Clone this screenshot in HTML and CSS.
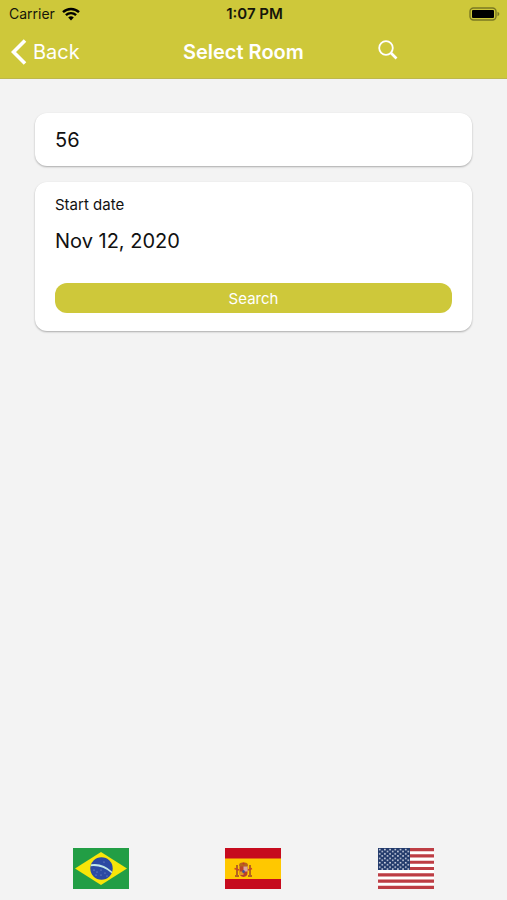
FILE: index.html
```html
<!DOCTYPE html>
<html lang="en">
<head>
    <meta charset="UTF-8">
    <meta name="viewport" content="width=device-width, initial-scale=1.0">
    <title>Select Room</title>
    <link rel="stylesheet" href="styles.css">
</head>
<body>
    <header class="header">
        <div class="status-bar">
            <div class="carrier">
                <span>Carrier</span>
                <svg class="wifi" viewBox="0 0 18 14" width="18" height="14" aria-hidden="true">
                    <path d="M1 5.2a11.5 11.5 0 0 1 16 0" />
                    <path d="M3.9 8.2a7.4 7.4 0 0 1 10.2 0" />
                    <path class="dot" d="M9 13.4L6.2 10.5a4.1 4.1 0 0 1 5.6 0z" />
                </svg>
            </div>
            <span class="time">1:07 PM</span>
            <svg class="battery" viewBox="0 0 31 14" width="31" height="14" aria-hidden="true">
                <rect class="battery-case" x="1" y="1" width="26" height="12" rx="3.5" />
                <rect x="3" y="3" width="22" height="8" rx="1" />
                <path class="battery-tip" d="M28.5 4.8c2.4 .8 2.4 3.6 0 4.4z" />
            </svg>
        </div>
        <nav class="navbar">
            <a href="#" class="back">
                <svg viewBox="0 0 16 26" width="16" height="26" aria-hidden="true">
                    <path d="M14 1.5L2.5 13L14 24.5" />
                </svg>
                <span>Back</span>
            </a>
            <h1>Select Room</h1>
            <button type="button" class="search-icon" aria-label="Search">
                <svg viewBox="0 0 20 20" width="20" height="20" aria-hidden="true">
                    <circle cx="8" cy="8" r="6.8" />
                    <path class="handle" d="M13 13L18.5 18.5" />
                </svg>
            </button>
        </nav>
    </header>

    <main>
        <form class="search-form">
            <div class="card">
                <input type="text" class="field" id="room" value="56" aria-label="Room">
            </div>
            <div class="card">
                <label for="startDate">Start date</label>
                <input type="text" class="field" id="startDate" value="Nov 12, 2020">
                <button type="button" class="search-button">Search</button>
            </div>
        </form>
    </main>

    <footer class="languages">
        <button type="button" aria-label="Português">
            <svg viewBox="0 0 56 41" width="56" height="41" aria-hidden="true">
                <rect width="56" height="41" fill="#229e45" />
                <path d="M28 4L54 20.5L28 37L2 20.5z" fill="#f8e509" />
                <circle cx="28.5" cy="20.5" r="11.2" fill="#2b49a3" />
                <path d="M18.2 16.2Q30 14.5 39.2 23.8L38.7 25.3Q29 17 17.6 18.3z" fill="#c3e8e8" />
                <g fill="#8fa6d4">
                    <circle cx="21" cy="22" r=".6" />
                    <circle cx="24" cy="24" r=".6" />
                    <circle cx="28" cy="22" r=".6" />
                    <circle cx="28" cy="27" r=".6" />
                    <circle cx="32" cy="25" r=".6" />
                    <circle cx="34" cy="28" r=".6" />
                    <circle cx="23" cy="27" r=".6" />
                    <circle cx="31" cy="14" r=".6" />
                </g>
            </svg>
        </button>
        <button type="button" aria-label="Español">
            <svg viewBox="0 0 56 41" width="56" height="41" aria-hidden="true">
                <rect width="56" height="41" fill="#c60b1e" />
                <rect y="10.5" width="56" height="20.5" fill="#ffc800" />
                <g fill="#b5651d">
                    <rect x="11" y="17" width="2" height="11" />
                    <rect x="24" y="17" width="2" height="11" />
                    <rect x="10" y="27" width="4" height="2" />
                    <rect x="23" y="27" width="4" height="2" />
                    <path d="M14 17.5Q14 14 18.5 14.5Q23 14 23 17.5L22 19H15z" />
                </g>
                <path d="M9.5 20.5L14 22M27 20.5L23 22" stroke="#c8452d" stroke-width="1.5" />
                <path d="M14.5 18.5H22.5V25Q22.5 28.5 18.5 29Q14.5 28.5 14.5 25z" fill="#b8412c" />
                <rect x="18.5" y="18.5" width="4" height="5" fill="#d9a5a0" />
                <rect x="14.5" y="23.5" width="4" height="3.5" fill="#e09a24" />
                <ellipse cx="18.5" cy="23.5" rx="1.3" ry="1.6" fill="#41509a" />
                <circle cx="18.5" cy="15.5" r="1" fill="#c83228" />
            </svg>
        </button>
        <button type="button" aria-label="English">
            <svg viewBox="0 0 56 41" width="56" height="41" aria-hidden="true">
                <defs>
                    <pattern id="stars" width="5.2" height="4.4" patternUnits="userSpaceOnUse">
                        <circle cx="1.7" cy="1.5" r=".9" fill="#d5dae8" />
                        <circle cx="4.3" cy="3.5" r=".9" fill="#d5dae8" />
                    </pattern>
                </defs>
                <rect width="56" height="41" fill="#fff" />
                <path d="M0 1.6H56M0 7.9H56M0 14.2H56M0 20.5H56M0 26.8H56M0 33.1H56M0 39.4H56" stroke="#bd3d44" stroke-width="3.15" />
                <rect width="32" height="22" fill="#223a6b" />
                <rect width="32" height="22" fill="url(#stars)" />
            </svg>
        </button>
    </footer>
</body>
</html>
```
FILE: styles.css
```css
* {
    box-sizing: border-box;
}
body {
    display: flex;
    flex-direction: column;
    min-height: 100vh;
    margin: 0;
    background-color: #f3f3f3;
    color: #111;
    font-family: Inter, "Liberation Sans", sans-serif;
}
button {
    padding: 0;
    border: none;
    background: none;
    cursor: pointer;
}
svg {
    display: block;
}
.header {
    background-color: #cec83a;
    border-bottom: 1px solid #bdb84c;
}
.status-bar {
    display: grid;
    grid-template-columns: 1fr auto 1fr;
    align-items: center;
    height: 27px;
    padding: 0 7px 0 9px;
    color: #16160a;
    font-size: 14px;
}
.carrier {
    display: flex;
    align-items: center;
    gap: 7px;
}
.wifi {
    fill: none;
    stroke: #000;
    stroke-width: 2.4;
}
.wifi .dot {
    fill: #000;
    stroke: none;
}
.time {
    font-size: 15px;
    font-weight: 600;
}
.battery {
    justify-self: end;
}
.battery-case {
    fill: none;
    stroke: #7b7823;
    stroke-width: 1.4;
}
.battery-tip {
    fill: #7b7823;
}
.navbar {
    display: grid;
    grid-template-columns: 30% 36% 1fr;
    align-items: center;
    height: 51px;
    padding-bottom: 2px;
    color: #fff;
}
.back {
    display: flex;
    align-items: center;
    gap: 6px;
    padding-left: 11px;
    color: #fff;
    font-size: 20px;
    text-decoration: none;
}
.back svg {
    fill: none;
    stroke: #fff;
    stroke-width: 3.6;
}
.navbar h1 {
    margin: 0;
    font-size: 20px;
    font-weight: 600;
    text-align: center;
}
.search-icon {
    justify-self: start;
    margin-left: 25%;
    padding-bottom: 4px;
}
.search-icon svg {
    fill: none;
    stroke: #fff;
    stroke-width: 1.8;
}
.search-icon .handle {
    stroke-width: 2.6;
}
main {
    flex: 1;
    padding: 34px 35px;
}
.search-form {
    display: flex;
    flex-direction: column;
    gap: 16px;
}
.card {
    display: flex;
    flex-direction: column;
    padding: 14px 20px;
    border-radius: 12px;
    background-color: #fff;
    box-shadow: 0 1px 2px rgba(0, 0, 0, 0.3);
}
.card label {
    margin-bottom: 14px;
    font-size: 15px;
    line-height: 18px;
}
.field {
    width: 100%;
    height: 25px;
    padding: 0;
    border: none;
    outline: none;
    background: none;
    color: #111;
    font-family: inherit;
    font-size: 20px;
}
.search-button {
    height: 30px;
    margin: 30px 0 4px;
    border-radius: 12px;
    background-color: #cec83a;
    color: #fff;
    font-family: inherit;
    font-size: 15px;
}
.languages {
    display: grid;
    grid-template-columns: repeat(3, 1fr);
    justify-items: center;
    padding: 0 5% 11px;
}
```
